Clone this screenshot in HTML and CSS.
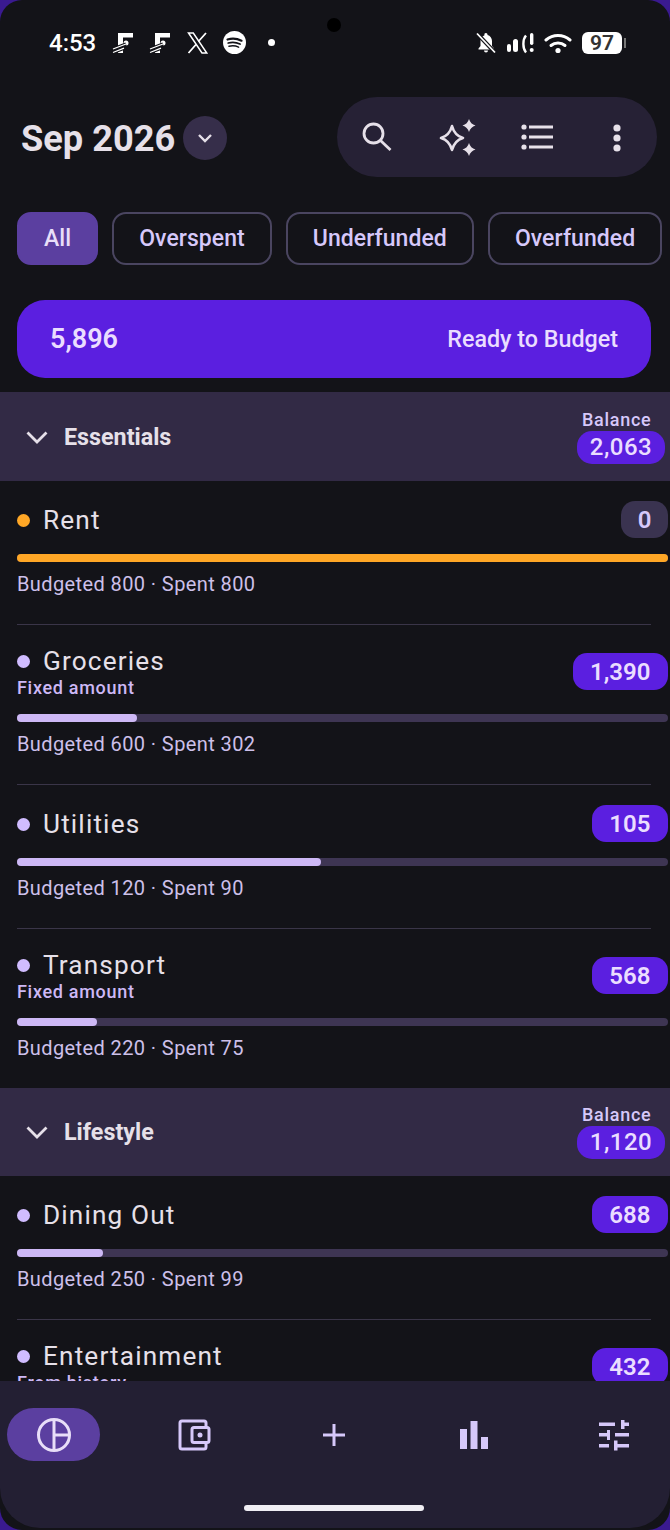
FILE: index.html
```html
<!DOCTYPE html>
<html lang="en">
<head>
    <meta charset="UTF-8">
    <meta name="viewport" content="width=device-width, initial-scale=1.0">
    <title>Budget</title>
    <link rel="stylesheet" href="styles.css">
</head>
<body>
<div class="screen">
    <div class="statusbar">
        <span class="time">4:53</span>
        <div class="notif-icons">
            <svg width="22" height="22" viewBox="0 0 22 22" fill="#fff"><path d="M6 1h15v4.500H11V21H6z"/><circle cx="14" cy="11" r="2.500"/><g stroke="#131318" stroke-width="3.400"><path d="M1 17l13-5M1 20.500l13-5"/></g><g stroke="#fff" stroke-width="1.300"><path d="M1 17l13-5M1 20.500l11-4.300"/></g></svg>
            <svg width="22" height="22" viewBox="0 0 22 22" fill="#fff"><path d="M6 1h15v4.500H11V21H6z"/><circle cx="14" cy="11" r="2.500"/><g stroke="#131318" stroke-width="3.400"><path d="M1 17l13-5M1 20.500l13-5"/></g><g stroke="#fff" stroke-width="1.300"><path d="M1 17l13-5M1 20.500l11-4.300"/></g></svg>
            <svg class="icon-x" width="21" height="22" viewBox="0 0 21 22"><path d="M1.500 1h4.800l13.500 20H15z" fill="none" stroke="#fff" stroke-width="1.500"/><path d="M19 1l-7.600 8.500M9 12.500L1.500 21" stroke="#fff" stroke-width="1.800"/></svg>
            <svg width="23" height="23" viewBox="0 0 23 23"><circle cx="11.500" cy="11.500" r="11.500" fill="#fff"/><g fill="none" stroke="#131318" stroke-linecap="round"><path d="M4.500 8.500c4.500-1.300 9.500-1 14 1.200" stroke-width="2.200"/><path d="M5.200 12c3.800-1 8-.8 11.800 1" stroke-width="1.800"/><path d="M6 15.300c3.200-.8 6.500-.6 9.600.8" stroke-width="1.500"/></g></svg>
            <span class="notif-dot"></span>
        </div>
        <span class="camera"></span>
        <div class="sys-icons">
            <svg width="20" height="22" viewBox="0 0 20 22" fill="#fff"><path d="M10 1a1.500 1.500 0 0 1 1.500 1.500v.6c2.700.7 4.500 3 4.500 6v5l2 2.400v1H2.500v-1l2-2.400v-5c0-1.500.5-2.900 1.300-4l2.700-1.900v-.1A1.500 1.500 0 0 1 10 1zM8 18.500h4a2 2 0 0 1-4 0z"/><path d="M1 1.500l18 19" stroke="#131318" stroke-width="4"/><path d="M1 1.500l18 19" stroke="#fff" stroke-width="1.800"/></svg>
            <svg width="28" height="22" viewBox="0 0 28 22" fill="#fff"><rect x="1" y="12" width="4" height="8" rx="2"/><rect x="7" y="7" width="5" height="13" rx="2.500"/><path d="M20 3.500c-3.500 4-3.500 13 0 17" fill="none" stroke="#fff" stroke-width="2.400"/><rect x="24" y="1" width="3.400" height="12" rx="1.700"/><circle cx="25.700" cy="18" r="2"/></svg>
            <svg width="28" height="22" viewBox="0 0 28 22" fill="none" stroke="#fff" stroke-width="3" stroke-linecap="round"><path d="M2 8c7-6 17-6 24 0"/><path d="M7 13.500c4-3.500 10-3.500 14 0"/><circle cx="14" cy="18.500" r="2.600" fill="#fff" stroke="none"/></svg>
            <div class="battery"><span class="battery-body">97</span><span class="battery-nub"></span></div>
        </div>
    </div>

    <div class="topbar">
        <div class="month">
            <h1 class="month-title">Sep 2026</h1>
            <span class="month-btn">
                <svg width="18" height="18" viewBox="0 0 18 18" fill="none" stroke="#e6e0e9" stroke-width="2.400"><path d="M3 6l6 6 6-6"/></svg>
            </span>
        </div>
        <div class="actions">
            <span class="action">
                <svg width="32" height="32" viewBox="0 0 32 32" fill="none" stroke="#e6e0e9" stroke-width="2.800"><circle cx="12.500" cy="12.500" r="9.500"/><path d="M19.500 19.500l10 9.500"/></svg>
            </span>
            <span class="action">
                <svg width="38" height="40" viewBox="0 0 38 40" fill="#e6e0e9"><path d="M14 9Q16.500 18.500 25 21 16.500 23.500 14 33 11.500 23.500 3 21 11.500 18.500 14 9z" fill="none" stroke="#e6e0e9" stroke-width="2.600" stroke-linejoin="round"/><path d="M31 2q1.500 5 6.500 6.500Q32.500 10 31 15q-1.500-5-6.500-6.500Q29.500 7 31 2zM31 26q1.500 5 6.500 6.500Q32.500 34 31 39q-1.500-5-6.500-6.500Q29.500 31 31 26z"/></svg>
            </span>
            <span class="action">
                <svg width="32" height="28" viewBox="0 0 32 28" fill="#e6e0e9"><circle cx="3" cy="4" r="2.600"/><circle cx="3" cy="14" r="2.600"/><circle cx="3" cy="24" r="2.600"/><rect x="8" y="2.500" width="24" height="3"/><rect x="8" y="12.500" width="24" height="3"/><rect x="8" y="22.500" width="24" height="3"/></svg>
            </span>
            <span class="action">
                <svg width="10" height="30" viewBox="0 0 10 30" fill="#e6e0e9"><circle cx="5" cy="6" r="3.600"/><circle cx="5" cy="16" r="3.600"/><circle cx="5" cy="26" r="3.600"/></svg>
            </span>
        </div>
    </div>

    <div class="filters">
        <span class="chip chip-active">All</span>
        <span class="chip">Overspent</span>
        <span class="chip">Underfunded</span>
        <span class="chip">Overfunded</span>
    </div>

    <div class="ready">
        <span class="ready-num">5,896</span>
        <span class="ready-label">Ready to Budget</span>
    </div>

    <div class="list">
        <div class="group group-first">
            <svg class="group-arrow" width="24" height="24" viewBox="0 0 24 24" fill="none" stroke="#e6e0e9" stroke-width="2.800"><path d="M2.500 7.500L12 17l9.500-9.500"/></svg>
            <span class="group-name">Essentials</span>
            <div class="group-balance">
                <span class="balance-label">Balance</span>
                <span class="balance-num">2,063</span>
            </div>
        </div>

        <div class="row">
            <div class="row-head">
                <div class="row-title"><span class="row-name"><span class="dot dot-warn"></span>Rent</span></div>
                <span class="amount amount-zero">0</span>
            </div>
            <div class="track"><div class="fill fill-warn" style="width:100%"></div></div>
            <div class="meta">Budgeted 800 · Spent 800</div>
        </div>
        <div class="row">
            <div class="row-head">
                <div class="row-title"><span class="row-name"><span class="dot"></span>Groceries</span><span class="row-sub">Fixed amount</span></div>
                <span class="amount">1,390</span>
            </div>
            <div class="track"><div class="fill" style="width:120px"></div></div>
            <div class="meta">Budgeted 600 · Spent 302</div>
        </div>
        <div class="row">
            <div class="row-head">
                <div class="row-title"><span class="row-name"><span class="dot"></span>Utilities</span></div>
                <span class="amount">105</span>
            </div>
            <div class="track"><div class="fill" style="width:304px"></div></div>
            <div class="meta">Budgeted 120 · Spent 90</div>
        </div>
        <div class="row row-last">
            <div class="row-head">
                <div class="row-title"><span class="row-name"><span class="dot"></span>Transport</span><span class="row-sub">Fixed amount</span></div>
                <span class="amount">568</span>
            </div>
            <div class="track"><div class="fill" style="width:80px"></div></div>
            <div class="meta">Budgeted 220 · Spent 75</div>
        </div>

        <div class="group">
            <svg class="group-arrow" width="24" height="24" viewBox="0 0 24 24" fill="none" stroke="#e6e0e9" stroke-width="2.800"><path d="M2.500 7.500L12 17l9.500-9.500"/></svg>
            <span class="group-name">Lifestyle</span>
            <div class="group-balance">
                <span class="balance-label">Balance</span>
                <span class="balance-num">1,120</span>
            </div>
        </div>

        <div class="row">
            <div class="row-head">
                <div class="row-title"><span class="row-name"><span class="dot"></span>Dining Out</span></div>
                <span class="amount">688</span>
            </div>
            <div class="track"><div class="fill" style="width:86px"></div></div>
            <div class="meta">Budgeted 250 · Spent 99</div>
        </div>
        <div class="row">
            <div class="row-head">
                <div class="row-title"><span class="row-name"><span class="dot"></span>Entertainment</span><span class="row-sub">From history</span></div>
                <span class="amount">432</span>
            </div>
        </div>
    </div>

    <div class="nav">
        <div class="nav-items">
            <span class="nav-item nav-active">
                <svg width="36" height="36" viewBox="0 0 36 36" fill="none" stroke="#e8def8" stroke-width="3"><circle cx="18" cy="18" r="15.500"/><path d="M18 2.500v31M18 18h15.500"/></svg>
            </span>
            <span class="nav-item">
                <svg width="34" height="34" viewBox="0 0 34 34" fill="none" stroke="#d6c8fa" stroke-width="3"><path d="M29 9V5a2 2 0 0 0-2-2H5a2 2 0 0 0-2 2v24a2 2 0 0 0 2 2h22a2 2 0 0 0 2-2v-4"/><rect x="15" y="9.500" width="17" height="15" rx="2"/><circle cx="23" cy="17" r="2.500" fill="#d6c8fa" stroke="none"/></svg>
            </span>
            <span class="nav-item">
                <svg width="26" height="26" viewBox="0 0 26 26" fill="none" stroke="#d6c8fa" stroke-width="3"><path d="M13 2v22M2 13h22"/></svg>
            </span>
            <span class="nav-item">
                <svg width="28" height="28" viewBox="0 0 28 28" fill="#d6c8fa"><rect x="0" y="8" width="7" height="20"/><rect x="10.500" y="0" width="7" height="28"/><rect x="21" y="16" width="7" height="12"/></svg>
            </span>
            <span class="nav-item">
                <svg width="32" height="32" viewBox="0 0 32 32" fill="#d6c8fa"><rect x="1" y="3.500" width="16" height="3.500"/><rect x="23" y="1" width="3.500" height="9"/><rect x="23" y="3.500" width="8" height="3.500"/><rect x="1" y="14" width="11" height="3.500"/><rect x="9" y="11" width="3" height="10"/><rect x="17" y="14" width="14" height="3.500"/><rect x="1" y="25" width="10" height="3.500"/><rect x="16" y="21.500" width="3.500" height="10"/><rect x="16" y="25" width="15" height="3.500"/></svg>
            </span>
        </div>
        <div class="home-bar"></div>
    </div>
</div>
</body>
</html>
```

FILE: styles.css
```css
*{
    box-sizing: border-box;
    font-family: Roboto, "Liberation Sans", sans-serif;
}
html, body{
    margin: 0;
    padding: 0;
    background-color: #3a1a90;
}
.screen{
    position: relative;
    display: flex;
    flex-direction: column;
    width: 670px;
    height: 1530px;
    overflow: hidden;
    border-radius: 22px;
    background-color: #131318;
    color: #e6e0e9;
}

/* status bar */
.statusbar{
    display: flex;
    align-items: center;
    flex-shrink: 0;
    height: 85px;
    padding: 0 44px 0 49px;
    color: #fff;
}
.time{
    font-size: 24px;
    font-weight: 500;
    width: 63px;
}
.notif-icons{
    display: flex;
    align-items: center;
    gap: 15px;
}
.icon-x{
    margin-left: 1px;
}
.notif-dot{
    width: 7px;
    height: 7px;
    margin-left: 7px;
    border-radius: 50%;
    background-color: #fff;
}
.camera{
    position: absolute;
    left: 327px;
    top: 18px;
    width: 14px;
    height: 14px;
    border-radius: 50%;
    background-color: #000;
}
.sys-icons{
    display: flex;
    align-items: center;
    gap: 10px;
    margin-left: auto;
}
.battery{
    display: flex;
    align-items: center;
    gap: 2px;
}
.battery-body{
    width: 40px;
    height: 22px;
    border-radius: 6px;
    background-color: #fff;
    color: #333;
    font-size: 21px;
    font-weight: 600;
    line-height: 22px;
    text-align: center;
}
.battery-nub{
    width: 2px;
    height: 10px;
    background-color: #777;
}

/* top */
.topbar{
    display: flex;
    align-items: center;
    justify-content: space-between;
    flex-shrink: 0;
    height: 80px;
    margin-top: 12px;
    padding: 0 13px 0 21px;
}
.month{
    display: flex;
    align-items: center;
    gap: 8px;
    margin-top: 2px;
}
.month-title{
    margin: 0;
    font-size: 36.200px;
    font-weight: 700;
    color: #e6e0e9;
}
.month-btn{
    display: flex;
    align-items: center;
    justify-content: center;
    width: 44px;
    height: 44px;
    border-radius: 50%;
    background-color: #362e4a;
}
.actions{
    display: flex;
    height: 80px;
    border-radius: 40px;
    background-color: #262135;
}
.action{
    display: flex;
    align-items: center;
    justify-content: center;
    width: 80px;
}

/* filter chips */
.filters{
    display: flex;
    gap: 14px;
    flex-shrink: 0;
    margin-top: 35px;
    padding-left: 17px;
}
.chip{
    display: flex;
    align-items: center;
    flex-shrink: 0;
    height: 53px;
    padding: 0 25px;
    border: 2px solid #4a4560;
    border-radius: 14px;
    color: #d6c8fa;
    font-size: 23px;
    font-weight: 500;
    letter-spacing: 0.060px;
}
.chip-active{
    border-color: #5b3fa0;
    background-color: #5b3fa0;
    color: #e8def8;
}

/* ready to budget */
.ready{
    display: flex;
    align-items: center;
    justify-content: space-between;
    flex-shrink: 0;
    height: 78px;
    margin: 35px 19px 14px 17px;
    padding: 0 33px;
    border-radius: 28px;
    background-color: #5b1fe0;
    color: #eaddff;
}
.ready-num{
    font-size: 27px;
    font-weight: 600;
}
.ready-label{
    font-size: 23.300px;
    font-weight: 500;
}

/* list */
.list{
    flex: 1;
    min-height: 0;
    overflow: hidden;
}
.group{
    display: flex;
    align-items: center;
    height: 88px;
    padding: 0 5px 0 25px;
    background-color: #322a45;
}
.group-first{
    height: 89px;
}
.group-name{
    margin-left: 15px;
    font-size: 23.300px;
    font-weight: 700;
    color: #e6e0e9;
}
.group-balance{
    display: flex;
    flex-direction: column;
    align-items: flex-start;
    margin-left: auto;
    margin-bottom: 1px;
}
.balance-label{
    margin-left: 5px;
    color: #d6c8fa;
    font-size: 18px;
    font-weight: 500;
    letter-spacing: 0.700px;
    line-height: 22px;
}
.balance-num{
    width: 88px;
    height: 33px;
    border-radius: 15px;
    background-color: #5b1fe0;
    color: #eaddff;
    font-size: 24px;
    font-weight: 500;
    letter-spacing: 0.500px;
    line-height: 33px;
    text-align: center;
}
.row{
    position: relative;
    padding: 20px 2px 30px 17px;
}
.row + .row{
    padding-top: 21px;
}
.row::after{
    content: "";
    position: absolute;
    left: 17px;
    right: 19px;
    bottom: -1px;
    height: 1px;
    background-color: #3a3548;
}
.row-last::after{
    display: none;
}
.row-head{
    display: flex;
    align-items: center;
    justify-content: space-between;
}
.row-title{
    display: flex;
    flex-direction: column;
}
.row-name{
    display: flex;
    align-items: center;
    gap: 13px;
    color: #e6e0e9;
    font-size: 26.200px;
    font-weight: 400;
    letter-spacing: 1.150px;
    line-height: 33px;
}
.row-name:only-child{
    padding-top: 2px;
}
.dot{
    flex-shrink: 0;
    width: 13px;
    height: 13px;
    border-radius: 50%;
    background-color: #d0bcff;
}
.dot-warn{
    background-color: #ffa726;
}
.row-sub{
    color: #cdb8f5;
    font-size: 18px;
    font-weight: 500;
    letter-spacing: 0.700px;
    line-height: 20px;
}
.amount{
    height: 37px;
    padding: 0 17.500px;
    border-radius: 14px;
    background-color: #5b1fe0;
    color: #eaddff;
    font-size: 24px;
    font-weight: 600;
    line-height: 38px;
}
.amount-zero{
    padding: 0 16.500px;
    background-color: #3a3350;
    color: #d6c8fa;
}
.track{
    height: 8px;
    margin-top: 16px;
    border-radius: 4px;
    background-color: #3e3553;
}
.fill{
    height: 8px;
    border-radius: 4px;
    background-color: #cdb8f5;
}
.fill-warn{
    background-color: #ffa726;
}
.meta{
    margin-top: 12px;
    color: #cdc0ea;
    font-size: 20px;
    letter-spacing: 0.400px;
    line-height: 20px;
}

/* bottom nav */
.nav{
    flex-shrink: 0;
    height: 147px;
    margin-bottom: 2px;
    padding-top: 27px;
    border-radius: 0 0 40px 40px;
    background-color: #231f33;
}
.nav-items{
    display: flex;
    gap: 47px;
    padding-left: 7px;
}
.nav-item{
    display: flex;
    align-items: center;
    justify-content: center;
    width: 93px;
    height: 53px;
    border-radius: 27px;
}
.nav-active{
    background-color: #5b3fa0;
}
.home-bar{
    width: 180px;
    height: 6px;
    margin: 44px 0 0 244px;
    border-radius: 3px;
    background-color: #f0eef4;
}
```
